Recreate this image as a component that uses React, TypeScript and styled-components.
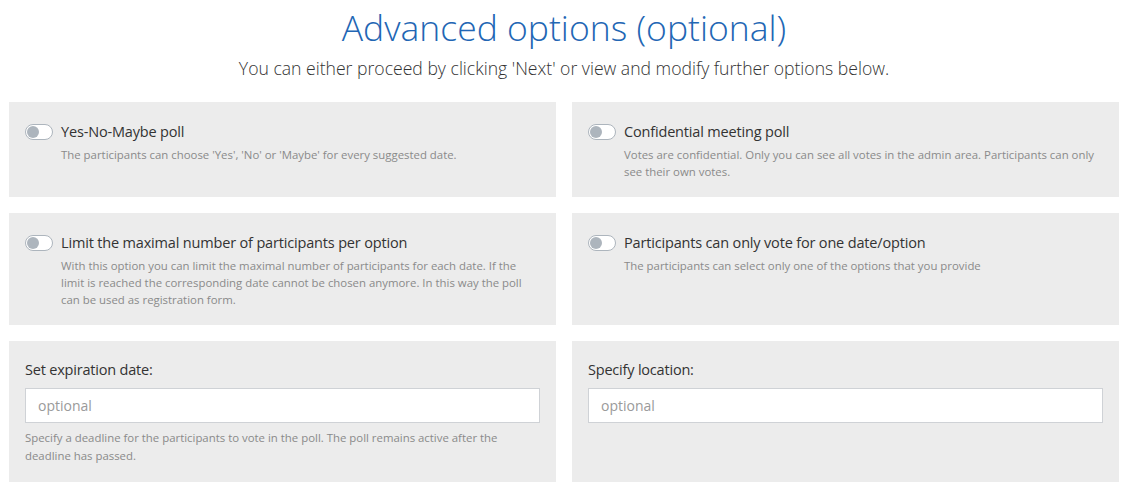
import { FC } from 'react';
import styled, { createGlobalStyle } from 'styled-components';

const GlobalStyle = createGlobalStyle`
  html, body {
    margin: 0;
    padding: 0;
    background: #ffffff;
  }
  body {
    font-family: 'Open Sans', 'Noto Sans', sans-serif;
    color: #333333;
  }
  * {
    box-sizing: border-box;
  }
`;

const Page = styled.div`
  padding: 0 21px 0 9px;
`;

const Header = styled.header`
  text-align: center;
  padding-top: 2px;
  margin-bottom: 22px;
`;

const Title = styled.h1`
  margin: 0;
  font-size: 35.5px;
  font-weight: 300;
  line-height: 50px;
  color: #2266b4;
`;

const Subtitle = styled.p`
  margin: 4px 0 0;
  font-size: 17.6px;
  font-weight: 300;
  line-height: 24px;
  color: #333333;
`;

const OptionsGrid = styled.div`
  display: grid;
  grid-template-columns: 1fr 1fr;
  gap: 16px;
`;

const Card = styled.section`
  background: #ececec;
  padding: 18px 16px 17px;
`;

const SwitchRow = styled.label`
  display: flex;
  align-items: center;
  gap: 7px;
  cursor: pointer;
`;

const SwitchTrack = styled.span<{ $on?: boolean }>`
  position: relative;
  flex: 0 0 auto;
  width: 28px;
  height: 16px;
  border-radius: 8px;
  border: 1px solid #adb5bd;
  background: ${(p) => (p.$on ? '#2266b4' : '#ffffff')};
  margin-right: 1px;

  &::after {
    content: '';
    position: absolute;
    top: 1px;
    left: ${(p) => (p.$on ? '13px' : '1px')};
    width: 12px;
    height: 12px;
    border-radius: 50%;
    background: ${(p) => (p.$on ? '#ffffff' : '#adb5bd')};
  }
`;

const OptionTitle = styled.span`
  font-size: 14.5px;
  letter-spacing: -0.17px;
  line-height: 24px;
  color: #333333;
`;

const Help = styled.p<{ $indent?: boolean }>`
  margin: 2px 0 0;
  padding-left: ${(p) => (p.$indent ? '36px' : '0')};
  font-size: 11.4px;
  line-height: 17px;
  color: #8a8a8a;
`;

const FieldLabel = styled.label`
  display: block;
  font-size: 14.5px;
  letter-spacing: -0.2px;
  line-height: 22px;
  margin-bottom: 7px;
  color: #333333;
`;

const TextInput = styled.input`
  display: block;
  width: 100%;
  height: 35px;
  padding: 0 12px;
  border: 1px solid #cfd2d6;
  border-radius: 0;
  background: #ffffff;
  font-family: inherit;
  font-size: 14px;
  color: #333333;
  outline: none;

  &::placeholder {
    color: #9a9a9a;
  }
`;

const FieldHelp = styled(Help)`
  margin-top: 6px;
  line-height: 18px;
`;

type SwitchOption = { title: string; help: string };

const switches: SwitchOption[] = [
  {
    title: 'Yes-No-Maybe poll',
    help: "The participants can choose 'Yes', 'No' or 'Maybe' for every suggested date.",
  },
  {
    title: 'Confidential meeting poll',
    help: 'Votes are confidential. Only you can see all votes in the admin area. Participants can only see their own votes.',
  },
  {
    title: 'Limit the maximal number of participants per option',
    help: 'With this option you can limit the maximal number of participants for each date. If the limit is reached the corresponding date cannot be chosen anymore. In this way the poll can be used as registration form.',
  },
  {
    title: 'Participants can only vote for one date/option',
    help: 'The participants can select only one of the options that you provide',
  },
];

const SwitchCard: FC<SwitchOption> = ({ title, help }) => (
  <Card>
    <SwitchRow>
      <SwitchTrack />
      <OptionTitle>{title}</OptionTitle>
    </SwitchRow>
    <Help $indent>{help}</Help>
  </Card>
);

const App: FC = () => (
  <>
    <GlobalStyle />
    <Page>
      <Header>
        <Title>Advanced options (optional)</Title>
        <Subtitle>You can either proceed by clicking 'Next' or view and modify further options below.</Subtitle>
      </Header>
      <OptionsGrid>
        {switches.map((s) => (
          <SwitchCard key={s.title} {...s} />
        ))}
        <Card>
          <FieldLabel htmlFor='expiration'>Set expiration date:</FieldLabel>
          <TextInput id='expiration' placeholder='optional' />
          <FieldHelp>
            Specify a deadline for the participants to vote in the poll. The poll remains active after the deadline has
            passed.
          </FieldHelp>
        </Card>
        <Card>
          <FieldLabel htmlFor='location'>Specify location:</FieldLabel>
          <TextInput id='location' placeholder='optional' />
        </Card>
      </OptionsGrid>
    </Page>
  </>
);

export default App;
